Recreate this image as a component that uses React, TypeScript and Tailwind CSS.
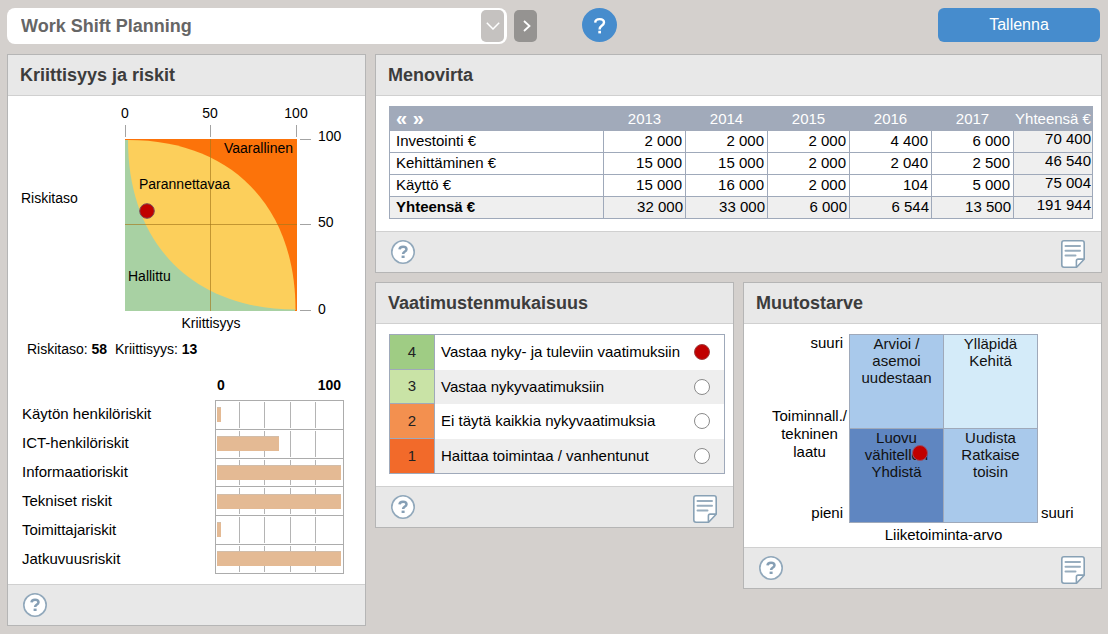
import React, { useState } from "react";

const YEARS = ["2013", "2014", "2015", "2016", "2017"];

const COST_ROWS = [
  { label: "Investointi €", values: ["2 000", "2 000", "2 000", "4 400", "6 000"], total: "70 400" },
  { label: "Kehittäminen €", values: ["15 000", "15 000", "2 000", "2 040", "2 500"], total: "46 540" },
  { label: "Käyttö €", values: ["15 000", "16 000", "2 000", "104", "5 000"], total: "75 004" },
];

const COST_SUM = { label: "Yhteensä €", values: ["32 000", "33 000", "6 000", "6 544", "13 500"], total: "191 944" };

const RISKS = [
  { label: "Käytön henkilöriskit", value: 3 },
  { label: "ICT-henkilöriskit", value: 50 },
  { label: "Informaatioriskit", value: 100 },
  { label: "Tekniset riskit", value: 100 },
  { label: "Toimittajariskit", value: 3 },
  { label: "Jatkuvuusriskit", value: 100 },
];

const LEVELS = [
  { level: "4", label: "Vastaa nyky- ja tuleviin vaatimuksiin", color: "bg-[#9fcc84]", row: "bg-white" },
  { level: "3", label: "Vastaa nykyvaatimuksiin", color: "bg-[#c9e3a6]", row: "bg-[#eeeeee]" },
  { level: "2", label: "Ei täytä kaikkia nykyvaatimuksia", color: "bg-[#f3904f]", row: "bg-white" },
  { level: "1", label: "Haittaa toimintaa / vanhentunut", color: "bg-[#f26a2a]", row: "bg-[#eeeeee]" },
];

function HelpButton() {
  return (
    <button type="button" aria-label="Ohje" className="size-6">
      <svg viewBox="0 0 24 24" className="size-6" fill="none">
        <circle cx="12" cy="12" r="11.2" fill="#fff" stroke="#91a8bb" strokeWidth="1.6" />
        <path
          d="M8.5 9.400C8.600 7.600 10 6.700 12 6.700c2 0 3.500.9 3.500 2.600 0 1.200-.8 1.800-1.900 2.500-.9.6-1.500 1-1.500 2.300"
          stroke="#869fb5"
          strokeWidth="2.5"
        />
        <rect x="10.600" y="15.600" width="3" height="2.400" fill="#869fb5" />
      </svg>
    </button>
  );
}

function NoteButton() {
  return (
    <button type="button" aria-label="Muistiinpano" className="h-7 w-6">
      <svg viewBox="0 0 24 28" className="h-7 w-6" fill="none" stroke="#88a1b5" strokeWidth="1.6">
        <path d="M3 .8h18q2.200 0 2.200 2.200v16.200L15.600 27.200H3Q.8 27.200 .8 25V3Q.8 .8 3 .8z" fill="#fff" />
        <path d="M15.400 27v-6.200q0-1.700 1.700-1.700H23" />
        <path d="M4.500 6h14.500M4.500 10.800h14.500M4.500 15.500h10" stroke="#98adbe" strokeWidth="2" strokeLinecap="round" />
      </svg>
    </button>
  );
}

function Panel(props: { title: string; note?: boolean; className?: string; children: React.ReactNode }) {
  return (
    <section className={"border border-[#b5b5b5] bg-white " + (props.className ?? "")}>
      <header className="flex h-[41px] items-center border-b border-[#d0d0d0] bg-[#e8e8e8] px-3">
        <h2 className="text-lg font-bold text-[#3c3c3c]">{props.title}</h2>
      </header>
      {props.children}
      <footer className="flex h-[41px] items-start justify-between border-t border-[#d0d0d0] bg-[#e8e8e8] pt-2 pr-4 pl-[15px]">
        <HelpButton />
        {props.note && <NoteButton />}
      </footer>
    </section>
  );
}

function RiskMap() {
  return (
    <svg
      viewBox="8 96 357 238"
      className="h-[238px] w-[357px] font-['Liberation_Sans',sans-serif] text-sm"
      fill="#000"
      role="img"
      aria-label="Riskitaso ja kriittisyys"
    >
      <g textAnchor="middle">
        <text x="125" y="118">0</text>
        <text x="210" y="118">50</text>
        <text x="296" y="118">100</text>
        <text x="211" y="328">Kriittisyys</text>
      </g>
      <g>
        <text x="318" y="141">100</text>
        <text x="318" y="227">50</text>
        <text x="318" y="314">0</text>
        <text x="21" y="203">Riskitaso</text>
      </g>
      <path d="M125.500 125v12M210.500 125v12M296.500 125v12M300 139.500h11M300 224.500h11M300 310.500h11" stroke="#a3a3a3" />
      <rect x="125" y="139" width="172" height="172" fill="#fc730a" />
      <path d="M125 140H128.500L296 310H295V311H125z" fill="#a8d1a3" />
      <path d="M128 140C231 140 295.500 206 295.500 309.500C193 309.500 128 244 128 140z" fill="#fccf5b" />
      <path d="M210.500 139v172M125 224.500h172" stroke="#a5781c" strokeOpacity=".65" />
      <text x="224" y="153">Vaarallinen</text>
      <text x="139" y="189">Parannettavaa</text>
      <text x="128" y="281">Hallittu</text>
      <circle cx="147" cy="211" r="7.300" fill="#c00000" stroke="#7a4a58" strokeWidth="1" />
    </svg>
  );
}

function RiskBars() {
  const lines = [29, 58, 86, 115, 144];
  const tops = [0, 29, 58, 87, 115, 144];
  return (
    <svg viewBox="0 0 129 174" className="h-[174px] w-[129px] shrink-0" aria-hidden="true">
      <path d="M24.500 2v170M49.500 2v170M75.500 2v170M100.500 2v170" stroke="#b4b4b4" />
      {lines.map((y) => (
        <g key={y}>
          <path d={`M1 ${y + 0.5}h127`} stroke="#fff" strokeWidth="3" />
          <path d={`M1 ${y + 0.5}h127`} stroke="#acacac" />
        </g>
      ))}
      <rect x="0.500" y="0.500" width="128" height="173" fill="none" stroke="#acacac" />
      {RISKS.map((risk, i) => (
        <g key={risk.label}>
          <rect x="2" y={tops[i] + 7} width={Math.max(4, risk.value * 1.24)} height="15" fill="#e4ba94" />
          <path d={`M2 ${tops[i] + 7.5}h${Math.max(4, risk.value * 1.24)}`} stroke="#d2bda9" />
        </g>
      ))}
    </svg>
  );
}

export default function App() {
  const [level, setLevel] = useState("4");

  return (
    <div className="min-h-screen bg-[#d4d0cd] pt-2 pr-1.5 pb-2 pl-[7px] font-['Liberation_Sans',sans-serif] text-[15px] text-black">
      <div className="mb-2.5 flex h-9 items-start pr-0.5">
        <div className="relative w-[500px]">
          <select
            aria-label="Suunnitelma"
            className="h-9 w-full appearance-none rounded-lg bg-white pr-8 pl-3.5 text-lg font-bold text-[#666666]"
          >
            <option>Work Shift Planning</option>
          </select>
          <span className="pointer-events-none absolute top-0.5 right-[3px] flex h-8 w-[23px] items-center justify-center rounded-[5px] bg-[#c5c2c0]">
            <svg viewBox="0 0 14 8" className="h-2 w-3.5" fill="none" stroke="#fff" strokeWidth="1.500">
              <path d="M.8 .8L7 7L13.200 .8" />
            </svg>
          </span>
        </div>
        <button
          type="button"
          aria-label="Seuraava"
          className="mt-0.5 ml-[7px] flex h-8 w-[23px] items-center justify-center rounded-[5px] bg-[#959391]"
        >
          <svg viewBox="0 0 8 12" className="ml-0.5 h-3 w-2" fill="none" stroke="#fff" strokeWidth="1.800">
            <path d="M1 1L6.500 6L1 11" />
          </svg>
        </button>
        <button type="button" aria-label="Ohje" className="ml-[45px] h-[34px] w-[35px]">
          <svg viewBox="0 0 35 34" className="h-[34px] w-[35px]" fill="none">
            <ellipse cx="17.500" cy="17" rx="17.500" ry="17" fill="#468ccd" />
            <path
              d="M13.200 14.600C13.300 12.300 15 11.100 17.600 11.100c2.600 0 4.400 1.300 4.400 3.400 0 1.600-1 2.300-2.300 3.200-1.300.9-2.100 1.500-2.100 3.700"
              stroke="#fff"
              strokeWidth="2.400"
            />
            <rect x="16.300" y="22.800" width="2.700" height="2.600" fill="#fff" />
          </svg>
        </button>
        <button type="button" className="ml-auto h-[34px] w-[162px] rounded-md bg-[#468ccd] text-base text-white">
          Tallenna
        </button>
      </div>

      <main className="grid grid-cols-3 items-start gap-[9px]">
        <Panel title="Kriittisyys ja riskit">
          <RiskMap />
          <p className="px-[19px] pt-[5px] text-sm leading-5">
            Riskitaso: <b>58</b>&nbsp; Kriittisyys: <b>13</b>
          </p>
          <div className="grid grid-cols-[1fr_129px] pt-4 pr-[21px] pb-2.5 pl-3.5">
            <div className="col-start-2 flex justify-between pr-[3px] pb-[5px] pl-0.5 text-sm leading-5 font-bold">
              <span>0</span>
              <span>100</span>
            </div>
            <ul className="col-start-1 grid h-[174px] grid-rows-6 items-center">
              {RISKS.map((risk) => (
                <li key={risk.label}>{risk.label}</li>
              ))}
            </ul>
            <RiskBars />
          </div>
        </Panel>

        <div className="col-span-2 grid grid-cols-2 items-start gap-[9px]">
          <Panel title="Menovirta" note className="col-span-2">
            <div className="pt-2.5 pr-2 pb-3 pl-[13px]">
              <table className="w-full table-fixed border-collapse text-right leading-[18px]">
                <thead>
                  <tr className="h-6 bg-[#a1aaba] text-white">
                    <th className="border border-[#a1aaba] pb-0.5 pl-1.5 text-left text-xl leading-5">
                      <button type="button" aria-label="Edelliset vuodet">«</button>{" "}
                      <button type="button" aria-label="Seuraavat vuodet">»</button>
                    </th>
                    {YEARS.map((year) => (
                      <th key={year} className="w-[82px] border border-[#a1aaba] text-center font-normal">
                        {year}
                      </th>
                    ))}
                    <th className="w-[79px] border border-[#a1aaba] text-center font-normal whitespace-nowrap">
                      Yhteensä €
                    </th>
                  </tr>
                </thead>
                <tbody>
                  {COST_ROWS.map((row) => (
                    <tr key={row.label} className="h-[22px]">
                      <th className="border border-[#9fa9ba] pb-0.5 pl-1.5 text-left font-normal">{row.label}</th>
                      {row.values.map((value, i) => (
                        <td key={YEARS[i]} className="border border-[#9fa9ba] pr-[3px] pb-0.5">
                          {value}
                        </td>
                      ))}
                      <td className="border border-[#9fa9ba] bg-[#efefef] pr-px align-top leading-4">{row.total}</td>
                    </tr>
                  ))}
                  <tr className="h-[22px] bg-[#efefef]">
                    <th className="border border-[#9fa9ba] pb-0.5 pl-1.5 text-left font-bold">{COST_SUM.label}</th>
                    {COST_SUM.values.map((value, i) => (
                      <td key={YEARS[i]} className="border border-[#9fa9ba] pr-0.5 pb-0.5">
                        {value}
                      </td>
                    ))}
                    <td className="border border-[#9fa9ba] pr-px align-top leading-4">{COST_SUM.total}</td>
                  </tr>
                </tbody>
              </table>
            </div>
          </Panel>

          <Panel title="Vaatimustenmukaisuus" note>
            <div className="pt-2.5 pr-2 pb-3 pl-[13px]">
              <div className="grid h-[140px] grid-rows-4 border border-[#9fa9ba]" role="radiogroup">
                {LEVELS.map((item) => (
                  <label key={item.level} className={"group flex items-stretch " + item.row}>
                    <span
                      className={
                        "flex w-[45px] items-center justify-center border-r border-b border-[#9fa9ba] text-[#222] group-last:border-b-0 " +
                        item.color
                      }
                    >
                      {item.level}
                    </span>
                    <span className="flex flex-1 items-center pl-1.5 whitespace-nowrap">{item.label}</span>
                    <input
                      type="radio"
                      name="level"
                      value={item.level}
                      checked={level === item.level}
                      onChange={() => setLevel(item.level)}
                      className="mr-3.5 size-4 appearance-none self-center rounded-full border border-[#8a8a8a] bg-white checked:border-[#a04040] checked:bg-[#c00000]"
                    />
                  </label>
                ))}
              </div>
            </div>
          </Panel>

          <Panel title="Muutostarve" note>
            <div className="grid grid-cols-[105px_189px_1fr] pt-2.5 pb-1 leading-[17px]">
              <div className="flex flex-col items-center justify-between pb-0.5 text-center">
                <span className="self-end pr-1.5">suuri</span>
                <span className="self-end pt-3 pr-0.5 leading-[18px]">
                  Toiminnall./
                  <br />
                  tekninen
                  <br />
                  laatu
                </span>
                <span className="self-end pr-1.5">pieni</span>
              </div>
              <div className="relative grid h-[189px] grid-cols-2 grid-rows-2 gap-px border border-[#9fa9ba] bg-[#9fa9ba] text-center text-[#111]">
                <div className="bg-[#a9c9eb]">
                  Arvioi /<br />
                  asemoi
                  <br />
                  uudestaan
                </div>
                <div className="bg-[#d4ebf9]">
                  Ylläpidä
                  <br />
                  Kehitä
                </div>
                <div className="bg-[#5f86c1]">
                  Luovu
                  <br />
                  vähitellen
                  <br />
                  Yhdistä
                </div>
                <div className="bg-[#a9c9eb]">
                  Uudista
                  <br />
                  Ratkaise
                  <br />
                  toisin
                </div>
                <span className="absolute top-[110px] left-[62px] size-4 rounded-full border border-[#93506a] bg-[#c00000]" />
              </div>
              <span className="self-end pb-0.5 pl-[3px]">suuri</span>
              <span className="col-start-2 pt-[3px] text-center">Liiketoiminta-arvo</span>
            </div>
          </Panel>
        </div>
      </main>
    </div>
  );
}
